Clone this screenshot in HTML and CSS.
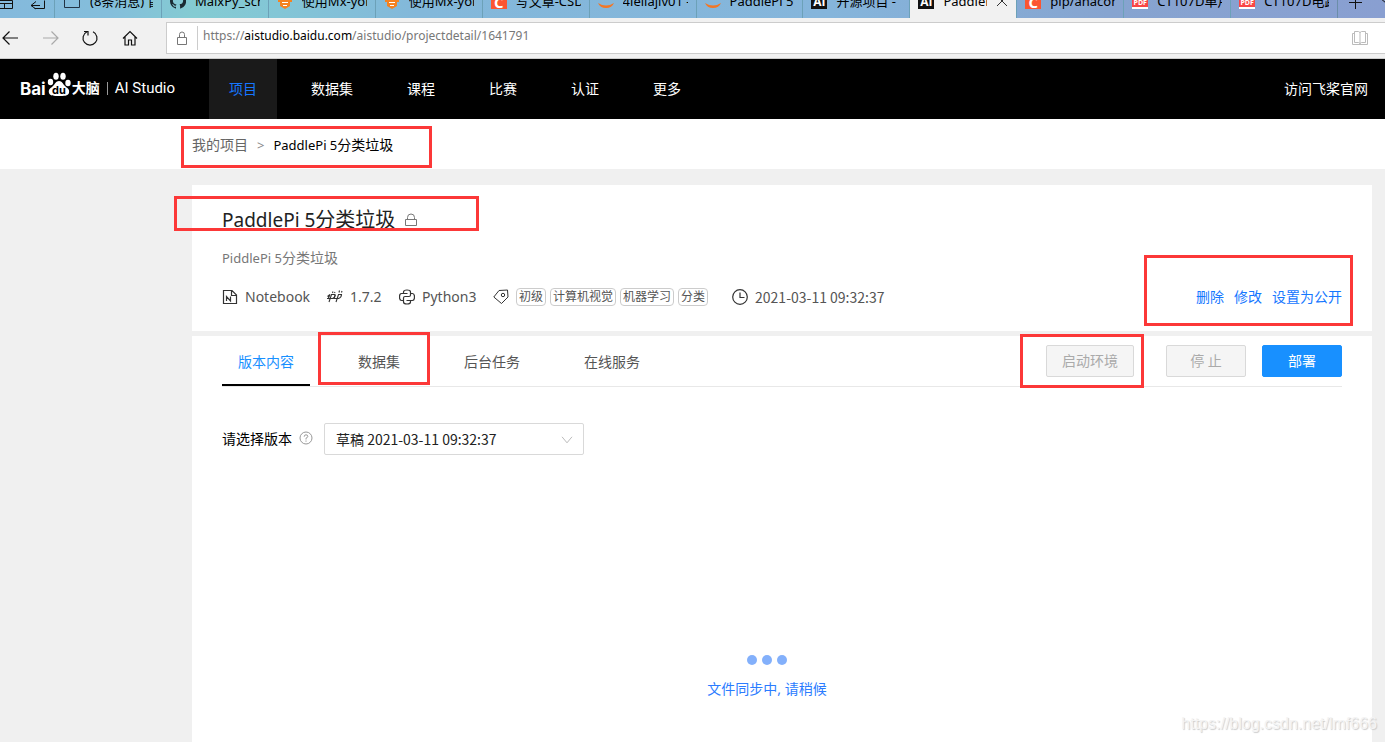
FILE: index.html
```html
<!DOCTYPE html>
<html lang="zh-CN">
<head>
<meta charset="utf-8">
<title>PaddlePi 5分类垃圾 - AI Studio</title>
<link rel="stylesheet" href="styles.css">
</head>
<body>
<div class="page">
  <div class="tabstrip">
    <div class="strip-tools">
      <svg width="48" height="32" viewBox="0 0 48 32" fill="none" stroke="#111"><path d="M-1 14.500h13.500v8h-13.500M-1 17.500h13.500M4.500 17v6M34.500 22.500h10v-8M36 15.500l-5 4 5 3.500M31 19.500h9"/></svg>
    </div>
    <div class="btab"><svg width="18" height="16" viewBox="0 0 18 16" fill="none" stroke="#234"><path d="M1.500.5h15v14h-15z"/></svg><span>(8条消息) 首页</span></div>
    <div class="btab"><svg width="16" height="16" viewBox="0 0 16 16"><path fill="#1b2b33" d="M8 0a8 8 0 0 0-2.500 15.600c.4.100.5-.2.500-.4v-1.500c-2.200.5-2.700-1-2.700-1-.4-.9-.9-1.200-.9-1.200-.7-.5.100-.5.100-.5.800.1 1.200.8 1.200.8.700 1.300 1.900.9 2.300.7.100-.5.300-.9.500-1.100C4.700 11.200 2.900 10.500 2.900 7.500c0-.9.300-1.600.8-2.100-.1-.3-.4-1.100.1-2.200 0 0 .7-.2 2.200.8a8 8 0 0 1 4 0c1.500-1 2.200-.8 2.200-.8.500 1.100.2 1.900.1 2.200.5.500.8 1.200.8 2.100 0 3-1.800 3.700-3.600 3.900.3.300.6.800.6 1.500v2.300c0 .2.100.5.500.4A8 8 0 0 0 8 0z"/></svg><span>MaixPy_scripts</span></div>
    <div class="btab"><svg width="16" height="16" viewBox="0 0 16 16"><path fill="#f58220" d="M1 4h14v5h-2v4l-5 3-5-3V9H1z"/><path d="M5 9.500h6M6 12.500h4" stroke="#fff"/></svg><span>使用Mx-yolo</span></div>
    <div class="btab"><svg width="16" height="16" viewBox="0 0 16 16"><path fill="#f58220" d="M1 4h14v5h-2v4l-5 3-5-3V9H1z"/><path d="M5 9.500h6M6 12.500h4" stroke="#fff"/></svg><span>使用Mx-yolo</span></div>
    <div class="btab"><i class="favicon favicon-c">C</i><span>写文章-CSDN</span></div>
    <div class="btab"><svg width="16" height="16" viewBox="0 0 16 16"><path fill="#f37726" d="M0 10q8 5 16 0-2 5-8 5t-8-5z"/></svg><span>4ieilajlv01 -</span></div>
    <div class="btab"><svg width="16" height="16" viewBox="0 0 16 16"><path fill="#f37726" d="M0 10q8 5 16 0-2 5-8 5t-8-5z"/></svg><span>PaddlePi 5分类</span></div>
    <div class="btab"><i class="favicon favicon-ai">AI</i><span>开源项目 -</span></div>
    <div class="btab btab-active"><i class="favicon favicon-ai">AI</i><span>PaddlePi</span><button class="plain" aria-label="关闭标签页"><svg width="12" height="12" viewBox="0 0 12 12" stroke="#333"><path d="M1 1l10 10M11 1L1 11"/></svg></button></div>
    <div class="btab"><i class="favicon favicon-c">C</i><span>pip/anaconda</span></div>
    <div class="btab"><i class="favicon favicon-pdf">PDF</i><span>CT107D单片机</span></div>
    <div class="btab"><i class="favicon favicon-pdf">PDF</i><span>CT107D电路图</span></div>
    <div class="strip-end">
      <svg width="38" height="32" viewBox="0 0 38 32" fill="none" stroke="#111"><path d="M1 16.500h13M7.500 10v13M32 12l6 5 6-5"/></svg>
    </div>
  </div>

  <div class="toolbar">
    <button class="plain" aria-label="后退"><svg width="20" height="20" viewBox="0 0 20 20" fill="none" stroke="#111" stroke-width="1.200"><path d="M18 10H3M9.500 3.500L3 10l6.500 6.500"/></svg></button>
    <button class="plain" aria-label="前进"><svg width="20" height="20" viewBox="0 0 20 20" fill="none" stroke="#aaa" stroke-width="1.200"><path d="M3 10h15M11.500 3.500L18 10l-6.500 6.500"/></svg></button>
    <button class="plain" aria-label="刷新"><svg width="20" height="20" viewBox="0 0 20 20" fill="none" stroke="#111" stroke-width="1.200"><path d="M13 3.800a7 7 0 1 1-6 0M4 3.500h4v4"/></svg></button>
    <button class="plain" aria-label="主页"><svg width="20" height="20" viewBox="0 0 20 20" fill="none" stroke="#111" stroke-width="1.200"><path d="M3 10.500l7-7 7 7M5 9v8h3.500v-5h3v5H15V9"/></svg></button>
    <div class="address">
      <svg width="12" height="14" viewBox="0 0 12 14" fill="none" stroke="#777"><path d="M1.500 6.500h9v7h-9zM3.500 6V3.500q0-2.500 2.500-2.500t2.500 2.500V6"/></svg>
      <p class="url">https://<b>aistudio.baidu.com</b>/aistudio/projectdetail/1641791</p>
      <svg width="16" height="14" viewBox="0 0 16 14" fill="none" stroke="#bbb"><path d="M2.500.5h4l1.500 1 1.500-1h4v11h-4l-1.500 1-1.500-1h-4zM8 1v12M2 2.500H.5v11h15v-11H14"/></svg>
    </div>
  </div>

  <nav class="nav">
    <a class="logo" href="#">
      <span class="logo-bai">Bai</span>
      <svg width="26" height="26" viewBox="0 0 26 26" fill="#fff"><ellipse cx="4.500" cy="10" rx="2.700" ry="3.300"/><ellipse cx="10" cy="4.300" rx="2.700" ry="3.500"/><ellipse cx="17" cy="4.300" rx="2.700" ry="3.500"/><ellipse cx="22" cy="11" rx="2.700" ry="3.300"/><path d="M13 9c3 0 4 3 6 5s5 3 4 7c-1 3-5 3-10 3s-9 0-10-3c-1-4 2-5 4-7s3-5 6-5z"/><text class="logo-du" x="13" y="22" text-anchor="middle">du</text></svg>
      <span class="logo-brain">大脑</span>
      <span class="logo-bar"></span>
      <span class="logo-studio">AI Studio</span>
    </a>
    <a class="nav-item nav-current" href="#">项目</a>
    <a class="nav-item" href="#">数据集</a>
    <a class="nav-item" href="#">课程</a>
    <a class="nav-item" href="#">比赛</a>
    <a class="nav-item" href="#">认证</a>
    <a class="nav-item" href="#">更多</a>
    <a class="nav-site" href="#">访问飞桨官网</a>
  </nav>

  <div class="crumbs">
    <a href="#">我的项目</a><span class="crumb-sep">&gt;</span><span><span class="latin">PaddlePi 5</span>分类垃圾</span>
  </div>

  <main class="content">
    <section class="card summary">
      <h1><span class="latin-title">PaddlePi 5</span>分类垃圾
        <svg width="12" height="14" viewBox="0 0 12 14" fill="none" stroke="#777"><path d="M.5 6.500h11v6H.5zM2.500 6V4.500q0-3.500 3.500-3.500t3.500 3.500V6"/></svg></h1>
      <p class="desc"><span class="latin">PiddlePi 5</span>分类垃圾</p>
      <div class="meta">
        <span class="meta-item meta-notebook"><svg width="16" height="16" viewBox="0 0 16 16" fill="none" stroke="#333"><path d="M1.500 1.500h8.500l4.500 4.500v8.500h-13zM9.500 1.500v5h5M4.500 12V7.500l4 4.500V7.500" stroke-width="1.200"/></svg>Notebook</span>
        <span class="meta-item meta-version"><svg width="16" height="16" viewBox="0 0 16 16" fill="none" stroke="#333" stroke-width="1.100"><path d="M.5 7.500L3 5.500 1 10M0 9.500h5.500q2.500-1 2.500-4H4.500L2 13M6 2.500L5.500 4M8 3l-.5 1M8.500 6L7 9.500h4.500q3-1 3-4h-3L9 13M12.500 1.500L12 3.500M15 2l-.5 1.500"/></svg>1.7.2</span>
        <span class="meta-item meta-python"><svg width="16" height="16" viewBox="0 0 16 16" fill="none" stroke="#333" stroke-width="1.200"><path d="M8.500 4.500H2.500q-2 0-2 3.500t2 3.500h2V9q0-1.500 1.500-1.500h4q1.500 0 1.500-1.500V3q0-2-3.500-2t-3.500 2v1.500M7.500 11.500h6q2 0 2-3.500t-2-3.500h-2M4.500 11v2q0 2 3.500 2t3.500-2v-1.500"/></svg>Python3</span>
        <span class="tags"><svg width="16" height="16" viewBox="0 0 16 16" fill="none" stroke="#333"><path d="M.8 8L6 1.500l8.500-.5.500 7-6.500 6.500z" stroke-linejoin="round"/><circle cx="10" cy="6" r="1.700"/></svg><span class="tag">初级</span><span class="tag">计算机视觉</span><span class="tag">机器学习</span><span class="tag">分类</span></span>
        <span class="meta-item"><svg width="16" height="16" viewBox="0 0 16 16" fill="none" stroke="#333" stroke-width="1.200"><circle cx="8" cy="8" r="7.300"/><path d="M8 3.500V8.500h4.500"/></svg><time class="date">2021-03-11 09:32:37</time></span>
        <span class="actions"><a href="#">删除</a><a href="#">修改</a><a href="#">设置为公开</a></span>
      </div>
      <i class="mark mark-title"></i>
      <i class="mark mark-actions"></i>
    </section>

    <section class="card detail">
      <div class="tabs">
        <a class="tab tab-current" href="#">版本内容</a>
        <a class="tab" href="#">数据集<i class="mark mark-dataset"></i></a>
        <a class="tab" href="#">后台任务</a>
        <a class="tab" href="#">在线服务</a>
        <div class="buttons">
          <span class="start"><button class="btn btn-start" disabled>启动环境</button><i class="mark mark-start"></i></span>
          <button class="btn" disabled>停 止</button>
          <button class="btn btn-primary">部署</button>
        </div>
      </div>
      <div class="version">
        <label for="version">请选择版本</label>
        <svg class="help" width="14" height="14" viewBox="0 0 14 14" fill="none" stroke="#999"><circle cx="7" cy="7" r="6"/><path d="M5.200 5.700q0-1.900 1.800-1.900t1.800 1.600Q8.800 6.500 7 7.200v1.300M7 9.500v1.200"/></svg>
        <span class="picker">
          <select id="version" class="date"><option>草稿 2021-03-11 09:32:37</option></select>
          <svg class="arrow" width="12" height="8" viewBox="0 0 12 8" fill="none" stroke="#bbb"><path d="M1 .8l5 6 5-6"/></svg>
        </span>
      </div>
      <div class="loading">
        <div class="dots"><i></i><i></i><i></i></div>
        <p>文件同步中, 请稍候</p>
      </div>
    </section>
  </main>
  <i class="mark mark-crumbs"></i>
  <span class="watermark">https://blog.csdn.net/lmf666</span>
</div>
</body>
</html>
```

FILE: styles.css
```css
* { box-sizing: border-box; }

body {
  margin: 0;
  background: #f0f0f0;
  color: #000;
  font: 14px/20px "Noto Sans", "Noto Sans CJK SC", sans-serif;
}

a { color: inherit; text-decoration: none; }
p, h1 { margin: 0; }
svg { display: block; flex: none; }

.page {
  position: relative;
  display: flex;
  flex-direction: column;
  min-height: 100vh;
  overflow: hidden;
}

.plain {
  padding: 0;
  border: 0;
  background: none;
}

/* browser tabs */
.tabstrip {
  display: flex;
  align-items: flex-end;
  height: 18px;
  overflow: hidden;
  background: linear-gradient(90deg, #84b9dc 0, #84bedb 8%, #84cbd2 14%, #83c6d6 20%, #83b8da 30%, #85b5db 60%, #86a4d0 80%, #899fd1 100%);
}

.strip-tools { flex: none; width: 54px; }
.strip-end { flex: none; width: 48px; padding-left: 10px; border-left: 1px solid #6b8ea9; }

.btab {
  display: flex;
  flex: 107 1 0;
  align-items: center;
  gap: 9px;
  min-width: 0;
  height: 34px;
  padding: 0 8px;
  border-left: 1px solid #6ca1b8;
  font-size: 13px;
}

.btab span {
  flex: 1;
  overflow: hidden;
  white-space: nowrap;
}

.btab-active { background: #f1f1f1; }

.favicon {
  flex: none;
  width: 16px;
  height: 16px;
  color: #fff;
  font: bold 12px/18px "Open Sans", sans-serif;
  text-align: center;
}

.favicon-c { background: #fc5531; font-size: 15px; }
.favicon-ai { background: #111; }
.favicon-pdf { border-bottom: 2px solid #fff; background: #fa4646; font-size: 7px; line-height: 20px; }

/* address bar */
.toolbar {
  display: flex;
  align-items: center;
  gap: 20px;
  height: 41px;
  border-bottom: 1px solid #ccc;
  background: #f1f1f1;
}

.address {
  display: flex;
  flex: 1;
  align-items: center;
  gap: 9px;
  height: 32px;
  margin-left: 6px;
  padding: 0 17px 0 9px;
  border: 1px solid #ccc;
  border-right: 0;
  background: #fff;
}

.url {
  flex: 1;
  height: 24px;
  padding-left: 5px;
  border-left: 1px solid #ccc;
  color: #777;
  font-size: 12px;
}

.url b { color: #000; font-weight: normal; }

/* site navigation */
.nav {
  display: flex;
  gap: 14px;
  align-items: center;
  height: 60px;
  background: #000;
  color: #fff;
  line-height: 60px;
}

.logo {
  display: flex;
  align-items: center;
  width: 195px;
  height: 26px;
  padding-left: 20px;
  margin-bottom: 8px;
  line-height: 26px;
  white-space: nowrap;
}

.logo-bai { padding-top: 7px; font: bold 17px/20px Inter, sans-serif; }
.logo-du { fill: #000; font: bold 11px Inter, sans-serif; }
.logo-brain { padding-top: 6px; font-weight: bold; }
.logo-bar { width: 1px; height: 13px; margin: 6px 7px 0; background: #999; }
.logo-studio { padding-top: 6px; font-size: 15px; font-family: Roboto, sans-serif; }

.nav-item { padding: 0 20px; }
.nav-current { background: #1a1a1a; color: #1677ff; }
.nav-site { margin-left: auto; padding-right: 17px; }

.crumbs {
  display: flex;
  align-items: center;
  height: 50px;
  padding: 2px 192px 0;
  background: #fff;
}

.crumbs a { color: #666; }
.crumb-sep { padding: 0 9px; color: #888; font-size: 13px; }
.latin { font-size: 13px; }

/* project */
.content {
  display: flex;
  flex: 1;
  flex-direction: column;
  gap: 5px;
  padding: 16px 13px 0 192px;
}

.card {
  position: relative;
  padding: 0 30px;
  background: #fff;
}

.summary { padding-top: 20px; padding-bottom: 24px; }

h1 {
  display: flex;
  align-items: center;
  color: #222;
  font-size: 20px;
  font-weight: normal;
  line-height: 30px;
}

h1 svg { margin-left: 10px; }
.latin-title { font-size: 19px; }
.desc { margin-top: 13px; color: #777; }

.meta {
  display: flex;
  align-items: center;
  height: 20px;
  margin-top: 19px;
  color: #555;
}

.meta-item { display: flex; align-items: center; gap: 7px; }
.meta-notebook { width: 105px; }
.meta-version { width: 72px; }
.meta-python { width: 94px; }
.tags { display: flex; align-items: center; gap: 4px; margin-right: 24px; }
.tags svg { margin-right: 3px; }

.tag {
  padding: 0 2px;
  border: 1px solid #ccc;
  border-radius: 4px;
  font-size: 12px;
  line-height: 16px;
}

.date { font-family: "Noto Sans CJK SC", sans-serif; }

.actions {
  display: flex;
  gap: 10px;
  margin-left: auto;
  color: #1677ff;
}

/* versions */
.detail {
  display: flex;
  flex: 1;
  flex-direction: column;
}

.tabs {
  display: flex;
  gap: 32px;
  height: 51px;
  border-bottom: 1px solid #e8e8e8;
  color: #555;
}

.tab {
  position: relative;
  height: 50px;
  padding: 0 16px;
  line-height: 52px;
}

.tab-current { border-bottom: 2px solid #000; color: #1890ff; }

.buttons {
  display: flex;
  gap: 16px;
  margin: 9px 0 0 auto;
}

.start { position: relative; margin-right: 16px; }

.btn {
  width: 80px;
  height: 32px;
  padding: 0;
  border: 1px solid #d9d9d9;
  border-radius: 2px;
  background: #f5f5f5;
  color: #aaa;
  font: inherit;
}

.btn-start { width: 88px; }
.btn-primary { border-color: #1890ff; background: #1890ff; color: #fff; }

.version {
  display: flex;
  align-items: center;
  margin-top: 36px;
}

.help { margin: 0 11px 2px 7px; }
.picker { position: relative; }

.picker select {
  display: block;
  width: 260px;
  height: 32px;
  padding: 0 11px;
  border: 1px solid #d9d9d9;
  border-radius: 2px;
  appearance: none;
  background: #fff;
  color: #222;
  font-size: 14px;
}

.arrow { position: absolute; top: 13px; right: 11px; pointer-events: none; }

.loading {
  margin: 200px 30px 40px 0;
  color: #2b7cff;
  text-align: center;
}

.dots { display: flex; justify-content: center; gap: 5px; margin-bottom: 14px; }
.dots i { width: 10px; height: 10px; border-radius: 50%; background: #83b0fb; }

/* callout frames */
.mark {
  position: absolute;
  border: 3px solid #fc3838;
  pointer-events: none;
}

.mark-crumbs { top: 126px; left: 181px; width: 251px; height: 42px; }
.mark-title { top: 11px; left: -18px; width: 305px; height: 35px; }
.mark-actions { top: 70px; right: 19px; width: 209px; height: 71px; z-index: 1; }
.mark-dataset { top: -4px; left: -24px; width: 112px; height: 53px; z-index: 1; }
.mark-start { top: -11px; left: -26px; width: 124px; height: 54px; z-index: 1; }

.watermark {
  position: absolute;
  right: 8px;
  bottom: 8px;
  color: #f4f4f4;
  font: 16px/20px "Liberation Sans", sans-serif;
  text-shadow: 1px 1px 1px #ccc;
}
```
